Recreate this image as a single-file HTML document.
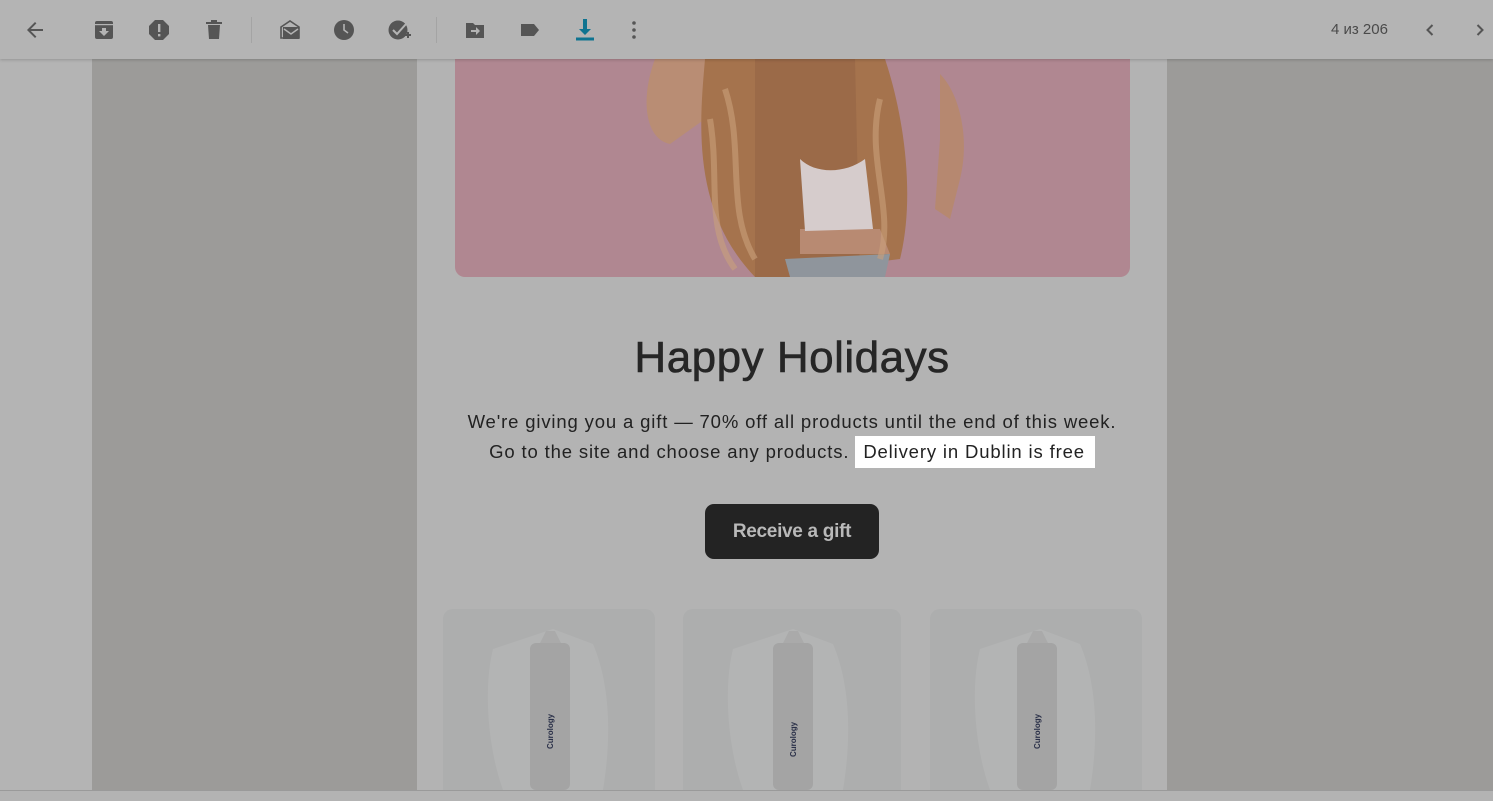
<!DOCTYPE html>
<html><head><meta charset="utf-8"><style>
*{margin:0;padding:0;box-sizing:border-box}
body{width:1493px;height:801px;overflow:hidden;background:#b4b4b4;font-family:"Liberation Sans",sans-serif;position:relative}
.tb{position:absolute;left:0;top:0;width:1493px;height:59px;background:#b4b4b4;box-shadow:0 1px 3px rgba(0,0,0,.18);z-index:5}
.ic{position:absolute;top:18px;width:24px;height:24px}
.sep{position:absolute;top:17px;width:1px;height:26px;background:#a4a4a4}
.lp{position:absolute;left:92px;top:59px;width:325px;height:731px;background:#9c9b99}
.rp{position:absolute;left:1167px;top:59px;width:326px;height:731px;background:#9c9b99}
.ct{position:absolute;left:417px;top:59px;width:750px;height:731px;background:#b3b3b3}
.bot{position:absolute;left:0;top:790px;width:1493px;height:11px;background:#b3b3b3;border-top:1px solid #9a9a9a}
.hero{position:absolute;left:455px;top:59px;width:675px;height:218px;background:#b08791;border-radius:0 0 10px 10px;overflow:hidden}
h1{position:absolute;left:417px;width:750px;top:333px;text-align:center;font-size:44px;font-weight:normal;color:#262626;letter-spacing:.5px;-webkit-text-stroke:.6px #262626}
.p{position:absolute;left:417px;width:750px;text-align:center;font-size:18.5px;color:#222;letter-spacing:.85px}
.hl{background:#fff;padding:5px 10px 6px 8px}
.btn{position:absolute;left:705px;top:504px;width:174px;height:55px;background:#232323;border-radius:9px;color:#b9b9b9;font-weight:bold;font-size:19px;text-align:center;line-height:55px;letter-spacing:-.3px}
.card{position:absolute;top:609px;height:181px;background:#adaeae;border-radius:10px 10px 0 0;overflow:hidden}
</style></head><body>
<div class="tb">
<svg class="ic" style="left:23px" viewBox="0 0 24 24"><path d="M20 11H7.8l5.6-5.6L12 4l-8 8 8 8 1.4-1.4L7.8 13H20z" fill="#555"/></svg>
<svg class="ic" style="left:92px" viewBox="0 0 24 24"><path d="M5 3h14a2 2 0 0 1 2 2v14a2 2 0 0 1-2 2H5a2 2 0 0 1-2-2V5a2 2 0 0 1 2-2z" fill="#555"/><rect x="3" y="6" width="18" height="1.2" fill="#b4b4b4"/><path d="M10 10h4v3h3l-5 5-5-5h3z" fill="#b4b4b4"/></svg>
<svg class="ic" style="left:147px" viewBox="0 0 24 24"><path d="M8 2h8l6 6v8l-6 6H8l-6-6V8z" fill="#555"/><rect x="11" y="6" width="2.4" height="8" fill="#b4b4b4"/><rect x="11" y="16" width="2.4" height="2.4" fill="#b4b4b4"/></svg>
<svg class="ic" style="left:202px" viewBox="0 0 24 24"><path d="M6 7h12l-1 14H7z M4 4h16v2H4z M9 2h6v2H9z" fill="#555"/></svg>
<div class="sep" style="left:251px"></div>
<svg class="ic" style="left:278px" viewBox="0 0 24 24"><path d="M3 9l9-6 9 6v11H3z" fill="none" stroke="#555" stroke-width="1.6"/><path d="M5 9h16v12H5z" fill="#555"/><path d="M6 11l7 5 7-5" fill="none" stroke="#b4b4b4" stroke-width="1.5"/></svg>
<svg class="ic" style="left:332px" viewBox="0 0 24 24"><circle cx="12" cy="12" r="10" fill="#555"/><path d="M12 6v6l4 3" fill="none" stroke="#b4b4b4" stroke-width="1.6"/></svg>
<svg class="ic" style="left:387px" viewBox="0 0 24 24"><circle cx="11" cy="12" r="9.5" fill="#555"/><path d="M6 12l4 4 9-10" fill="none" stroke="#b4b4b4" stroke-width="2"/><path d="M18 17h6M21 14v6" stroke="#555" stroke-width="2"/></svg>
<div class="sep" style="left:436px"></div>
<svg class="ic" style="left:463px" viewBox="0 0 24 24"><path d="M3 5h7l2 2h9v13H3z" fill="#555"/><path d="M8 12h5V9l4 4-4 4v-3H8z" fill="#b4b4b4"/></svg>
<svg class="ic" style="left:518px" viewBox="0 0 24 24"><path d="M3 6h13l5 6-5 6H3z" fill="#555"/></svg>
<svg class="ic" style="left:573px" viewBox="0 0 24 24"><path d="M10 1h4v10h4l-6 6-6-6h4z" fill="#0e7390"/><rect x="3" y="19.5" width="18" height="3" fill="#0e7390"/></svg>
<svg class="ic" style="left:622px" viewBox="0 0 24 24"><circle cx="12" cy="5" r="1.8" fill="#555"/><circle cx="12" cy="12" r="1.8" fill="#555"/><circle cx="12" cy="19" r="1.8" fill="#555"/></svg>
<div style="position:absolute;left:1331px;top:21px;font-size:15px;color:#4a4a4a">4 из 206</div>
<svg class="ic" style="left:1418px" viewBox="0 0 24 24"><path d="M14.5 7l-5 5 5 5" fill="none" stroke="#555" stroke-width="2"/></svg>
<svg class="ic" style="left:1468px" viewBox="0 0 24 24"><path d="M9.5 7l5 5-5 5" fill="none" stroke="#555" stroke-width="2"/></svg>
</div>
<div class="lp"></div><div class="rp"></div><div class="ct"></div>
<div class="hero"><svg width="675" height="218" viewBox="0 0 675 218">
<path d="M200 0 C185 40 190 80 215 85 L250 60 L250 0z" fill="#b98d74"/>
<path d="M485 15 C505 35 515 80 505 120 L495 160 L480 150 L485 80z" fill="#b68870"/>
<path d="M250 0 L430 0 C450 60 460 140 445 200 L300 218 C235 150 245 60 250 0z" fill="#a5734d"/>
<path d="M300 0 L400 0 L405 218 L300 218z" fill="#9b6a48"/>
<path d="M345 170 L425 170 L435 195 L345 195z" fill="#b88a72"/>
<path d="M345 100 C360 115 390 115 410 100 L418 170 L350 172z" fill="#d6cccc"/>
<path d="M330 200 L435 195 L430 218 L335 218z" fill="#8f959c"/>
<path d="M270 30 C290 90 270 150 300 200 M425 40 C410 100 440 150 425 200 M255 60 C265 120 250 170 280 210" stroke="#c9a07c" stroke-width="6" fill="none" opacity=".6"/>
</svg></div>
<h1>Happy Holidays</h1>
<div class="p" style="top:411px">We're giving you a gift — 70% off all products until the end of this week.</div>
<div class="p" style="top:441px">Go to the site and choose any products. <span class="hl">Delivery in Dublin is free</span></div>
<div class="btn">Receive a gift</div>
<div class="card" style="left:443px;width:212px"><svg width="212" height="181"><path d="M50 40 C40 80 45 140 60 181 L160 181 C170 120 165 70 150 35 L110 20z" fill="#b3b4b4"/><rect x="87" y="34" width="40" height="147" rx="6" fill="#a4a4a4"/><path d="M97 34 L103 22 L112 22 L118 34z" fill="#aaa"/><text transform="translate(110,140) rotate(-90)" font-size="8" font-weight="bold" fill="#2a3048" font-family="Liberation Sans">Curology</text></svg></div>
<div class="card" style="left:683px;width:218px"><svg width="218" height="181"><path d="M50 40 C40 80 45 140 60 181 L160 181 C170 120 165 70 150 35 L110 20z" fill="#b3b4b4"/><rect x="90" y="34" width="40" height="147" rx="6" fill="#a4a4a4"/><path d="M100 34 L106 22 L115 22 L121 34z" fill="#aaa"/><text transform="translate(113,148) rotate(-90)" font-size="8" font-weight="bold" fill="#2a3048" font-family="Liberation Sans">Curology</text></svg></div>
<div class="card" style="left:930px;width:212px"><svg width="212" height="181"><path d="M50 40 C40 80 45 140 60 181 L160 181 C170 120 165 70 150 35 L110 20z" fill="#b3b4b4"/><rect x="87" y="34" width="40" height="147" rx="6" fill="#a4a4a4"/><path d="M97 34 L103 22 L112 22 L118 34z" fill="#aaa"/><text transform="translate(110,140) rotate(-90)" font-size="8" font-weight="bold" fill="#2a3048" font-family="Liberation Sans">Curology</text></svg></div>
<div class="bot"></div>
</body></html>
